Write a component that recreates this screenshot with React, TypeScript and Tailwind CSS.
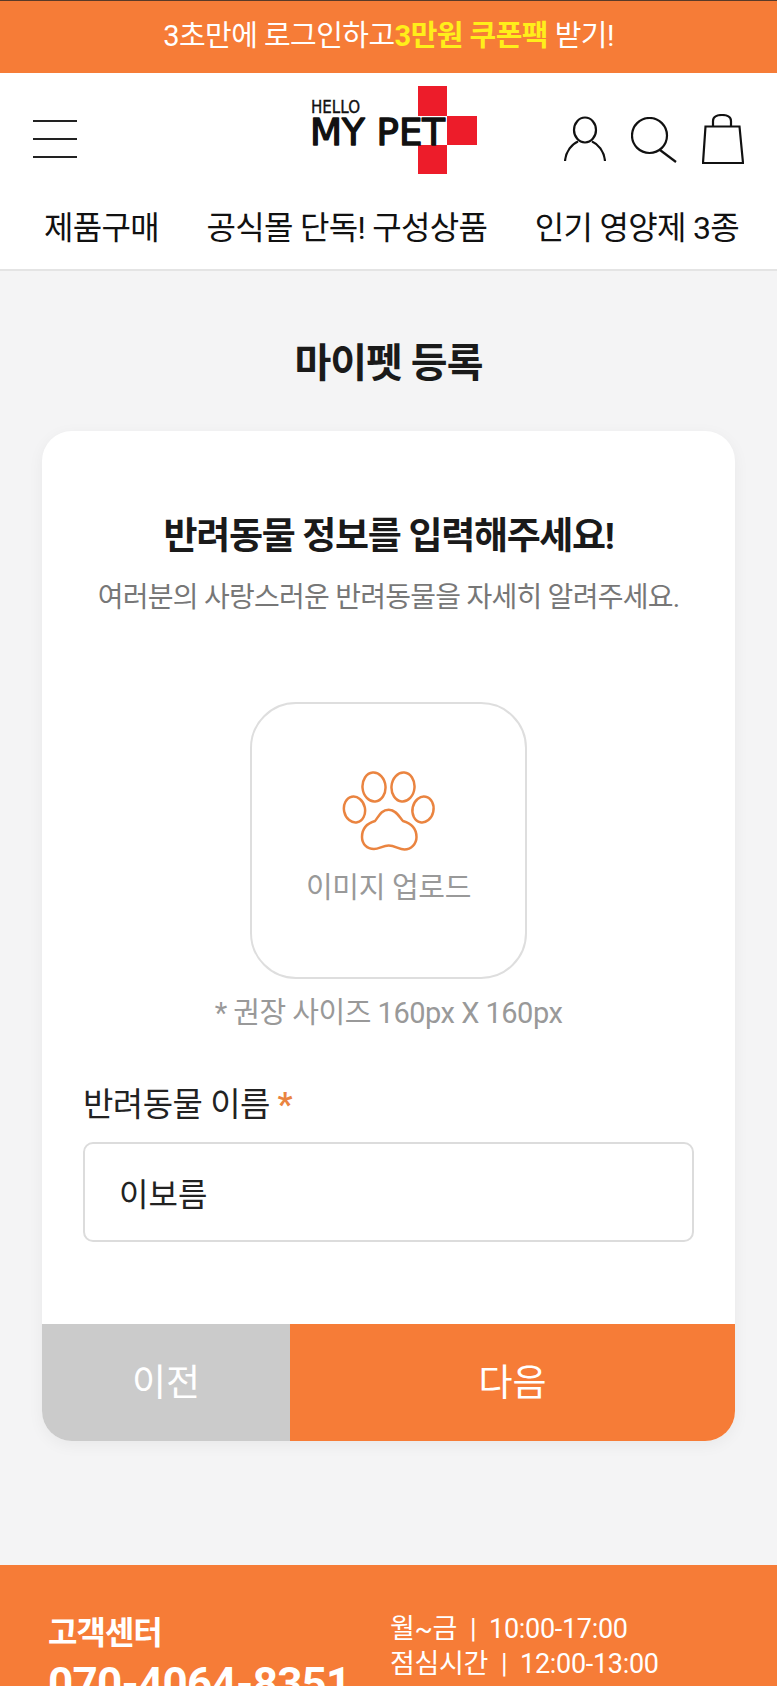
import React from "react";

const ORANGE = "bg-[#f67c37]";

const Logo = () => (
  <svg width="170" height="90" viewBox="0 0 170 90" className="block">
    <rect x="110" y="0" width="29" height="30" fill="#ed1c2a" />
    <rect x="139" y="30" width="30" height="29" fill="#ed1c2a" />
    <rect x="110" y="59" width="29" height="29" fill="#ed1c2a" />
    <text x="3" y="27" fontFamily="'DejaVu Sans', sans-serif" fontSize="18" textLength="49" lengthAdjust="spacingAndGlyphs" fill="#111" stroke="#111" strokeWidth="0.4">
      HELLO
    </text>
    <text x="2" y="59" fontFamily="'DejaVu Sans', sans-serif" fontSize="37" textLength="135" lengthAdjust="spacingAndGlyphs" fill="#111" stroke="#111" strokeWidth="1.4" strokeLinejoin="round">
      MY PET
    </text>
  </svg>
);

const Paw = () => (
  <svg width="94" height="82" viewBox="0 0 94 82" fill="none" stroke="#ea8440" strokeWidth="2.5" className="block">
    <ellipse cx="12.5" cy="38.5" rx="10.5" ry="13" transform="rotate(-12 12.5 38.5)" />
    <ellipse cx="32" cy="16" rx="11.5" ry="14.5" transform="rotate(-5 32 16)" />
    <ellipse cx="61" cy="16" rx="11.5" ry="14.5" transform="rotate(5 61 16)" />
    <ellipse cx="81" cy="38.5" rx="10.5" ry="13" transform="rotate(12 81 38.5)" />
    <path d="M46.7 38.7C39 38.7 36.5 46 33 50C28 51.5 20 55 20 66C20 73 25 78 32 78C37 78 41 74.5 46.7 74.5C53 74.5 57 78.5 62.5 78.5C69 78.5 74.5 73 74.5 66C74.5 55 66 51.5 61 50C57.5 46 54 38.7 46.7 38.7Z" />
  </svg>
);

const Header = () => (
  <header className="h-[198px] bg-white border-b-2 border-[#e4e4e4]">
    <div className="h-[135px] flex items-start pl-[33px] pr-[33px]">
      <div className="w-[44px] mt-[47px] flex flex-col gap-[16px]">
        <div className="h-[2px] bg-[#222]" />
        <div className="h-[2px] bg-[#222]" />
        <div className="h-[2px] bg-[#222]" />
      </div>
      <div className="ml-[231px] mt-[13px]">
        <Logo />
      </div>
      <div className="ml-auto flex items-start gap-[25px] mt-[41px]">
        <svg width="42" height="46" viewBox="0 0 42 46" fill="none" stroke="#111" strokeWidth="2.2" className="mt-[2px]">
          <ellipse cx="21" cy="14" rx="11" ry="12.5" />
          <path d="M1 45C2 35 8 28 14 25.5M41 45C40 35 34 28 28 25.5" />
        </svg>
        <svg width="46" height="46" viewBox="0 0 46 46" fill="none" stroke="#111" strokeWidth="2.2" className="mt-[3px]">
          <circle cx="18.5" cy="18.5" r="17.5" />
          <path d="M29 33L45 45" />
        </svg>
        <svg width="42" height="50" viewBox="0 0 42 50" fill="none" stroke="#111" strokeWidth="2.2">
          <path d="M3.5 12.5H37.5L41 49H1Z" />
          <path d="M11 13V7C11 3 15 1 20 1C25 1 29 3 29 7V13" />
        </svg>
      </div>
    </div>
    <nav className="flex justify-between pl-[44px] pr-[38px] text-[32px] leading-[40px] tracking-[-0.7px] text-[#111]">
      <span>제품구매</span>
      <span>공식몰 단독! 구성상품</span>
      <span>인기 영양제 3종</span>
    </nav>
  </header>
);

export default function App() {
  return (
    <div className="h-[1686px] overflow-hidden bg-[#f4f4f5] font-['Roboto','Noto_Sans_CJK_KR',sans-serif]">
      <div className={`h-[73px] ${ORANGE} border-t border-[#5a3a28] flex items-center justify-center text-[29px] tracking-[-0.55px] text-white`}>
        <span>3초만에 로그인하고</span>
        <span className="font-bold text-[#ffee1a]">3만원 쿠폰팩</span>
        <span>&nbsp;받기!</span>
      </div>
      <Header />

      <main className="px-[42px] h-[1294px]">
        <h1 className="pt-[68px] h-[160px] text-center text-[40px] leading-[50px] font-bold tracking-[-1px] text-[#1a1a1a]">
          마이펫 등록
        </h1>
        <div className="bg-white rounded-[30px] shadow-[0_4px_16px_rgba(0,0,0,0.05)] overflow-hidden h-[1010px] flex flex-col">
          <div className="flex-1 px-[41px] pt-[83px]">
            <h2 className="text-center text-[37px] leading-[46px] font-bold tracking-[-1.3px] text-[#1a1a1a]">
              반려동물 정보를 입력해주세요!
            </h2>
            <p className="mt-[20px] text-center text-[28px] leading-[36px] tracking-[-0.75px] text-[#777]">
              여러분의 사랑스러운 반려동물을 자세히 알려주세요.
            </p>
            <div className="mx-auto mt-[86px] w-[277px] h-[277px] rounded-[46px] border-2 border-[#dedede] flex flex-col items-center pt-[67px]">
              <Paw />
              <span className="mt-[17px] text-[29px] leading-[36px] text-[#999] tracking-[-0.3px]">이미지 업로드</span>
            </div>
            <p className="mt-[16px] text-center text-[29px] leading-[36px] tracking-[-0.5px] text-[#999]">
              * 권장 사이즈 160px X 160px
            </p>
            <label className="block mt-[54px] text-[33px] leading-[40px] tracking-[-0.5px] text-[#222]">
              반려동물 이름 <span className="text-[#ea8440] font-bold">*</span>
            </label>
            <div className="mt-[17px] h-[100px] rounded-[10px] border-2 border-[#dcdcdc] flex items-center pl-[34px] pt-[5px] text-[32px] text-[#222]">
              이보름
            </div>
          </div>
          <div className="h-[117px] flex text-[37px] text-white">
            <div className="w-[248px] bg-[#cbcbcb] flex items-center justify-center pt-[3px]">이전</div>
            <div className={`flex-1 ${ORANGE} flex items-center justify-center pt-[3px]`}>다음</div>
          </div>
        </div>
      </main>

      <footer className={`${ORANGE} h-[300px] pl-[48px] pt-[48px] flex text-white`}>
        <div className="w-[342px]">
          <div className="text-[32px] leading-[40px] font-bold tracking-[-1px]">고객센터</div>
          <div className="mt-[6px] text-[44px] leading-[50px] font-bold tracking-[-0.75px]">070-4064-8351</div>
        </div>
        <div className="text-[27px] leading-[35px] tracking-[-0.3px] -mt-[1px]">
          <div>월~금&nbsp;&nbsp;|&nbsp;&nbsp;10:00-17:00</div>
          <div>점심시간&nbsp;&nbsp;|&nbsp;&nbsp;12:00-13:00</div>
        </div>
      </footer>
    </div>
  );
}
